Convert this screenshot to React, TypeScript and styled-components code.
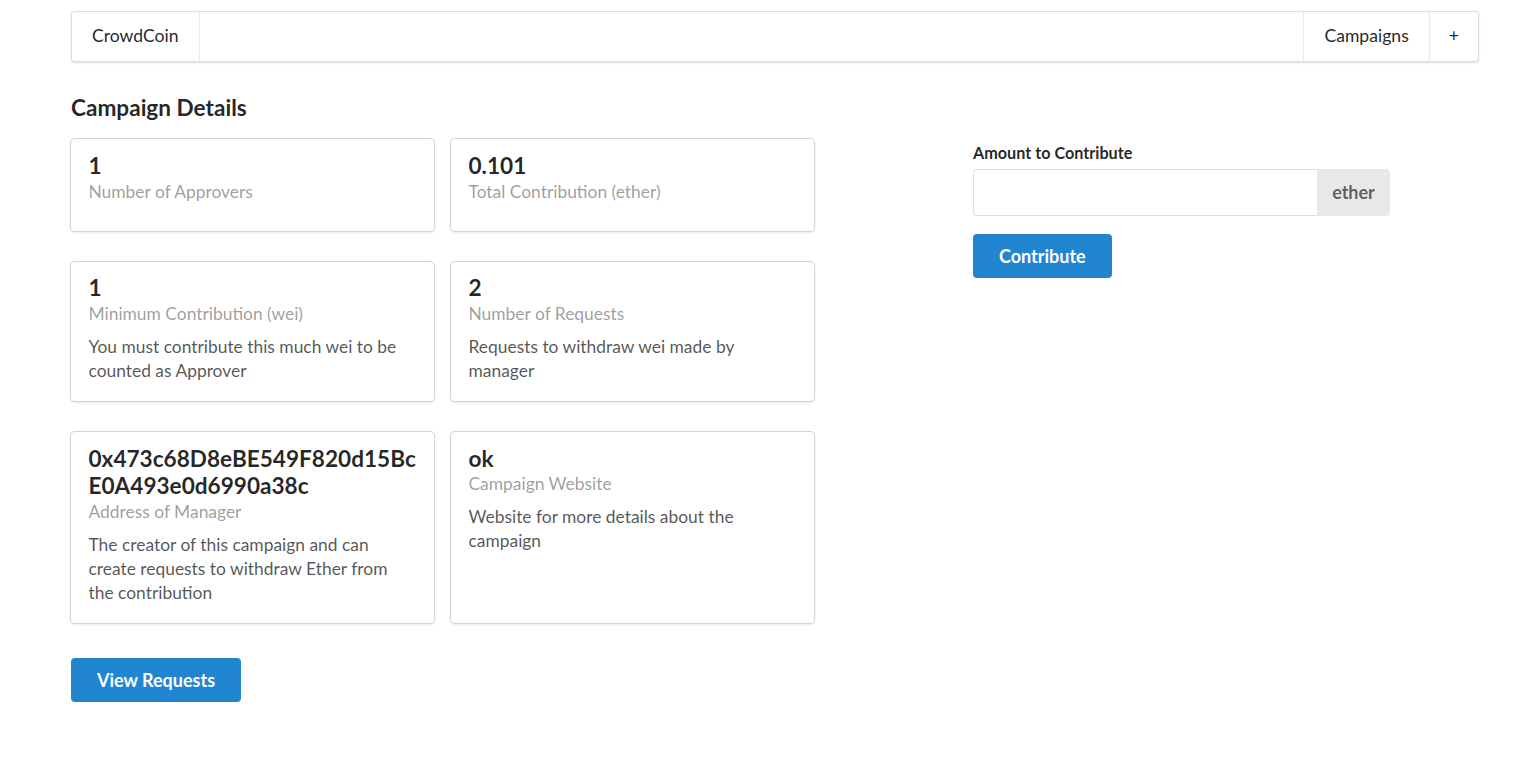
import React from "react";
import styled, { createGlobalStyle } from "styled-components";

const GlobalStyle = createGlobalStyle`
  html, body { margin: 0; padding: 0; background: #ffffff; }
  body {
    font-family: Lato, "Helvetica Neue", Arial, sans-serif;
    font-size: 17.4px;
    line-height: 24px;
    color: rgba(0, 0, 0, 0.87);
  }
  * { box-sizing: border-box; }
`;

const Page = styled.div`
  padding: 11px 0 40px 71px;
  width: 1479px;
`;

const Menu = styled.nav`
  display: flex;
  min-height: 50.6px;
  border: 1px solid rgba(34, 36, 38, 0.15);
  border-radius: 4px;
  box-shadow: 0 1px 2px 0 rgba(34, 36, 38, 0.15);
  background: #fff;
`;

const MenuItem = styled.a<{ $divider?: "left" | "right"; $pad?: number }>`
  display: flex;
  align-items: center;
  padding: 0 ${(p) => p.$pad ?? 20}px;
  font-size: 17.6px;
  color: rgba(0, 0, 0, 0.87);
  text-decoration: none;
  cursor: pointer;
  ${(p) =>
    p.$divider === "right"
      ? "border-right: 1px solid rgba(34, 36, 38, 0.1);"
      : p.$divider === "left"
      ? "border-left: 1px solid rgba(34, 36, 38, 0.1);"
      : ""}
`;

const MenuRight = styled.div`
  display: flex;
  margin-left: auto;
`;

const Heading = styled.h3`
  margin: 32px 0 18px;
  font-size: 22.6px;
  line-height: 27.8px;
  font-weight: 700;
`;

const Main = styled.div`
  display: grid;
  grid-template-columns: 743px 416px;
  column-gap: 159px;
  align-items: start;
`;

const CardGrid = styled.div`
  display: grid;
  grid-template-columns: 363px 363px;
  column-gap: 17px;
  row-gap: 30.6px;
`;

const Card = styled.div`
  background: #fff;
  border-radius: 4px;
  box-shadow: 0 1px 3px 0 #d4d4d5, 0 0 0 1px #d4d4d5;
  padding: 17px 17.5px 18.6px;
`;

const CardHeader = styled.div`
  font-size: 22.6px;
  font-weight: 700;
  line-height: 27.8px;
  margin-top: -4.2px;
  word-break: break-all;
  color: rgba(0, 0, 0, 0.85);
`;

const CardMeta = styled.div`
  color: rgba(0, 0, 0, 0.4);
  line-height: 24px;
`;

const CardDescription = styled.div`
  margin-top: 8.4px;
  line-height: 24px;
  color: rgba(0, 0, 0, 0.68);
`;

const PrimaryButton = styled.button`
  font-family: Lato, "Helvetica Neue", Arial, sans-serif;
  font-size: 18px;
  font-weight: 700;
  line-height: 18px;
  padding: 13px 26px;
  color: #fff;
  background: #2185d0;
  border: none;
  border-radius: 4px;
  cursor: pointer;
`;

const ButtonRow = styled.div`
  margin-top: 35px;
`;

const Form = styled.form`
  padding-top: 3px;
  display: flex;
  flex-direction: column;
  align-items: flex-start;
`;

const FieldLabel = styled.label`
  display: block;
  font-size: 16.2px;
  font-weight: 700;
  line-height: 22.3px;
  margin-bottom: 4.8px;
  color: rgba(0, 0, 0, 0.87);
`;

const LabeledInput = styled.div`
  display: flex;
  width: 417px;
  height: 47px;
`;

const TextInput = styled.input`
  flex: 1;
  min-width: 0;
  font-family: Lato, "Helvetica Neue", Arial, sans-serif;
  font-size: 17.4px;
  padding: 11px 16.8px;
  border: 1px solid rgba(34, 36, 38, 0.15);
  border-right: none;
  border-radius: 4px 0 0 4px;
  outline: none;
  color: rgba(0, 0, 0, 0.87);
`;

const InputLabel = styled.div`
  display: flex;
  align-items: center;
  justify-content: center;
  width: 73px;
  padding-bottom: 2px;
  background: #e8e8e8;
  color: rgba(0, 0, 0, 0.6);
  font-size: 18px;
  font-weight: 700;
  border-radius: 0 4px 4px 0;
`;

const ContributeWrap = styled.div`
  margin-top: 18px;
`;

const cards = [
  { header: "1", meta: "Number of Approvers" },
  { header: "0.101", meta: "Total Contribution (ether)" },
  {
    header: "1",
    meta: "Minimum Contribution (wei)",
    description: "You must contribute this much wei to be counted as Approver",
  },
  {
    header: "2",
    meta: "Number of Requests",
    description: "Requests to withdraw wei made by manager",
  },
  {
    header: "0x473c68D8eBE549F820d15BcE0A493e0d6990a38c",
    meta: "Address of Manager",
    description:
      "The creator of this campaign and can create requests to withdraw Ether from the contribution",
  },
  {
    header: "ok",
    meta: "Campaign Website",
    description: "Website for more details about the campaign",
  },
];

export default function App() {
  return (
    <>
      <GlobalStyle />
      <Page>
        <Menu>
          <MenuItem $divider="right">CrowdCoin</MenuItem>
          <MenuRight>
            <MenuItem $divider="left">Campaigns</MenuItem>
            <MenuItem $divider="left" $pad={19}>+</MenuItem>
          </MenuRight>
        </Menu>
        <Heading>Campaign Details</Heading>
        <Main>
          <div>
            <CardGrid>
              {cards.map((c, i) => (
                <Card key={i}>
                  <CardHeader>{c.header}</CardHeader>
                  <CardMeta>{c.meta}</CardMeta>
                  <CardDescription>{c.description}</CardDescription>
                </Card>
              ))}
            </CardGrid>
            <ButtonRow>
              <PrimaryButton type="button">View Requests</PrimaryButton>
            </ButtonRow>
          </div>
          <Form onSubmit={(e) => e.preventDefault()}>
            <FieldLabel>Amount to Contribute</FieldLabel>
            <LabeledInput>
              <TextInput type="text" />
              <InputLabel>ether</InputLabel>
            </LabeledInput>
            <ContributeWrap>
              <PrimaryButton type="submit">Contribute</PrimaryButton>
            </ContributeWrap>
          </Form>
        </Main>
      </Page>
    </>
  );
}
